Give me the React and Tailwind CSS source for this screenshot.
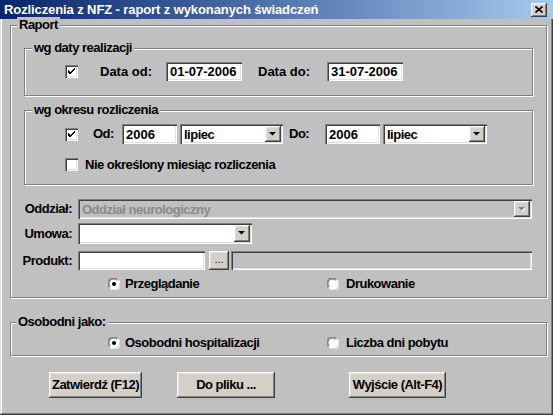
import React from "react";

const sunken =
  "shadow-[inset_1px_1px_0_#808080,inset_2px_2px_0_#404040,inset_-1px_-1px_0_#fff,inset_-2px_-2px_0_#dfdfdf]";
const raised =
  "shadow-[inset_-1px_-1px_0_#404040,inset_1px_1px_0_#fff,inset_-2px_-2px_0_#808080,inset_2px_2px_0_#dfdfdf]";

function Group({ label, legendLeft = "left-[7px]", className = "", children }) {
  return (
    <div
      className={`relative border border-[#808080] shadow-[inset_1px_1px_0_#fff,1px_1px_0_#fff] ${className}`}
    >
      <span
        className={`absolute top-[-9px] ${legendLeft} px-[2px] bg-[#c0c0c0] leading-[16px] whitespace-nowrap`}
      >
        {label}
      </span>
      {children}
    </div>
  );
}

function Checkbox({ checked }) {
  return (
    <div className={`w-[13px] h-[13px] shrink-0 bg-white ${sunken} flex items-center justify-center`}>
      {checked && (
        <svg width="7" height="7" viewBox="0 0 7 7">
          <path d="M0 2h1v1h1v1h1V3h1V2h1V1h1V0h1v2h-1v1h-1v1h-1v1h-1v1h-1v1H2V6H1V5H0z" fill="#000" />
        </svg>
      )}
    </div>
  );
}

function Radio({ checked }) {
  return (
    <svg width="12" height="12" viewBox="0 0 12 12" className="shrink-0">
      <circle cx="6" cy="6" r="5.5" fill="#fff" />
      <path d="M1.2 9.5A5.5 5.5 0 0 1 9.5 1.2" stroke="#808080" strokeWidth="1" fill="none" />
      <path d="M2.2 8.8A4.3 4.3 0 0 1 8.8 2.2" stroke="#404040" strokeWidth="1" fill="none" />
      <path d="M10.8 2.5A5.5 5.5 0 0 1 2.5 10.8" stroke="#fff" strokeWidth="1" fill="none" />
      {checked && <circle cx="6" cy="6" r="2" fill="#000" />}
    </svg>
  );
}

function Arrow({ disabled }) {
  return (
    <div className={`w-[16px] h-full shrink-0 bg-[#d4d0c8] ${raised} flex items-center justify-center`}>
      <svg width="8" height="5" viewBox="0 0 8 5">
        {disabled && <path d="M1 1h7L4.5 4.5z" fill="#fff" />}
        <path d="M0 0h7L3.5 3.5z" fill={disabled ? "#808080" : "#000"} />
      </svg>
    </div>
  );
}

function Field({ value = "", className = "", disabled }) {
  return (
    <div
      className={`${disabled ? "bg-[#c0c0c0]" : "bg-white"} ${sunken} flex items-center pl-[4px] leading-none tracking-normal shrink-0 ${className}`}
    >
      {value}
    </div>
  );
}

function Combo({ value = "", className = "", disabled }) {
  return (
    <div
      className={`${disabled ? "bg-[#c0c0c0] text-[#8a8a8a]" : "bg-white"} ${sunken} flex items-center p-[2px] shrink-0 ${className}`}
    >
      <span className="flex-1 pl-[2px] leading-none whitespace-nowrap">{value}</span>
      <Arrow disabled={disabled} />
    </div>
  );
}

function Button({ children, className = "" }) {
  return (
    <div
      className={`h-[26px] bg-[#d4d0c8] ${raised} flex items-center justify-center whitespace-nowrap ${className}`}
    >
      {children}
    </div>
  );
}

export default function App() {
  return (
    <div className="w-[553px] h-[415px] bg-[#c0c0c0] overflow-hidden font-['Liberation_Sans',Arial,sans-serif] text-[13px] font-bold tracking-[-0.5px] text-black shadow-[inset_-1px_-1px_0_#404040,inset_1px_1px_0_#dfdfdf,inset_-2px_-2px_0_#808080,inset_2px_2px_0_#fff]">
      {/* title bar */}
      <div className="h-[19px] bg-gradient-to-r from-[#0a246a] to-[#a6caf0] flex items-center justify-between pl-[4px] pr-[6px]">
        <span className="text-white leading-none whitespace-nowrap tracking-[-0.1px]">
          Rozliczenia z NFZ - raport z wykonanych świadczeń
        </span>
        <div className={`w-[16px] h-[14px] bg-[#d4d0c8] ${raised} flex items-center justify-center`}>
          <svg width="8" height="7" viewBox="0 0 8 7">
            <path d="M0.5 0.5l7 6M7.5 0.5l-7 6" stroke="#000" strokeWidth="1.6" />
          </svg>
        </div>
      </div>

      <div className="pl-[10px] pt-[6px]">
        <Group label="Raport" legendLeft="left-[6px]" className="w-[537px] h-[273px] pl-[13px] pt-[22px]">
          <Group label="wg daty realizacji" className="w-[509px] h-[48px] pt-[13px] pl-[40px]">
            <div className="flex items-center h-[19px]">
              <Checkbox checked />
              <span className="ml-[22px] w-[66px] whitespace-nowrap tracking-normal">Data od:</span>
              <Field value="01-07-2006" className="w-[76px] h-[19px]" />
              <span className="ml-[16px] w-[69px] whitespace-nowrap tracking-normal">Data do:</span>
              <Field value="31-07-2006" className="w-[76px] h-[19px]" />
            </div>
          </Group>

          <Group label="wg okresu rozliczenia" className="mt-[14px] w-[509px] h-[75px] pt-[13px] pl-[40px]">
            <div className="flex items-center h-[20px]">
              <Checkbox checked />
              <span className="ml-[15px] w-[29px]">Od:</span>
              <Field value="2006" className="w-[55px] h-[20px]" />
              <Combo value="lipiec" className="ml-[3px] w-[103px] h-[20px]" />
              <span className="ml-[6px] w-[36px]">Do:</span>
              <Field value="2006" className="w-[55px] h-[20px]" />
              <Combo value="lipiec" className="ml-[3px] w-[104px] h-[20px]" />
            </div>
            <div className="flex items-center h-[13px] mt-[14px]">
              <Checkbox />
              <span className="ml-[7px] whitespace-nowrap">Nie określony miesiąc rozliczenia</span>
            </div>
          </Group>

          <div className="flex items-center h-[20px] mt-[14px]">
            <span className="w-[48px] flex justify-end whitespace-nowrap">Oddział:</span>
            <Combo value="Oddział neurologiczny" disabled className="ml-[6px] w-[454px] h-[20px]" />
          </div>
          <div className="flex items-center h-[21px] mt-[4px]">
            <span className="w-[48px] flex justify-end whitespace-nowrap">Umowa:</span>
            <Combo className="ml-[6px] w-[174px] h-[21px]" />
          </div>
          <div className="flex items-center h-[19px] mt-[7px]">
            <span className="w-[48px] flex justify-end whitespace-nowrap">Produkt:</span>
            <Field className="ml-[6px] w-[127px] h-[19px]" />
            <Button className="ml-[4px] w-[20px] !h-[19px] text-[11px] font-normal tracking-normal pb-[2px]">...</Button>
            <Field disabled className="ml-[2px] w-[301px] h-[19px]" />
          </div>
          <div className="flex items-center h-[14px] mt-[7px]">
            <div className="w-[303px] pl-[84px] flex items-center">
              <Radio checked />
              <span className="ml-[5px]">Przeglądanie</span>
            </div>
            <div className="flex items-center">
              <Radio />
              <span className="ml-[7px]">Drukowanie</span>
            </div>
          </div>
        </Group>

        <Group label="Osobodni jako:" legendLeft="left-[5px]" className="mt-[24px] w-[537px] h-[34px] pt-[14px]">
          <div className="flex items-center h-[12px]">
            <div className="w-[316px] pl-[97px] flex items-center">
              <Radio checked />
              <span className="ml-[5px] whitespace-nowrap">Osobodni hospitalizacji</span>
            </div>
            <div className="flex items-center">
              <Radio />
              <span className="ml-[7px] whitespace-nowrap">Liczba dni pobytu</span>
            </div>
          </div>
        </Group>

        <div className="flex mt-[16px] ml-[39px]">
          <Button className="w-[93px]">Zatwierdź (F12)</Button>
          <Button className="ml-[35px] w-[98px]">Do pliku ...</Button>
          <Button className="ml-[74px] w-[97px]">Wyjście (Alt-F4)</Button>
        </div>
      </div>
    </div>
  );
}
